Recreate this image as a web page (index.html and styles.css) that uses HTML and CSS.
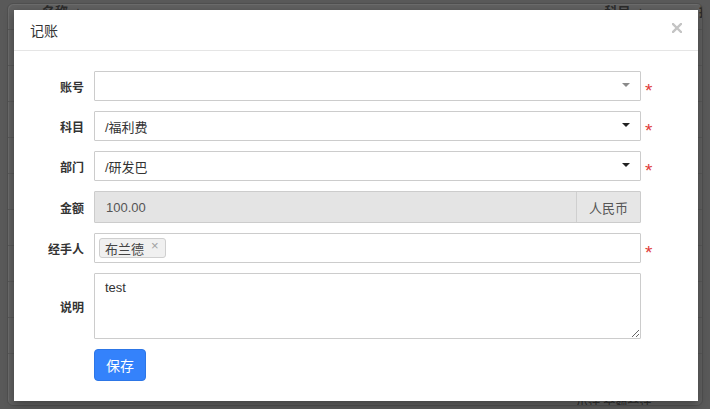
FILE: index.html
```html
<!DOCTYPE html>
<html lang="zh">
<head>
<meta charset="utf-8">
<title>记账</title>
<link rel="stylesheet" href="styles.css">
</head>
<body>
<div class="page">
  <div class="panel">
    <div class="thead">
      <span class="th th-name">名称 ▲</span>
      <span class="th th-subj">科目 ▲</span>
      <span class="th th-desc">描</span>
    </div>
    <div class="trow"></div><div class="trow"></div><div class="trow"></div>
    <div class="trow"></div><div class="trow"></div><div class="trow"></div>
    <div class="trow"></div><div class="trow"></div><div class="trow"></div>
    <div class="tfoot">小计 金额合计</div>
  </div>
</div>

<div class="overlay">
  <div class="modal">
    <div class="modal-header">
      <span class="modal-title">记账</span>
      <svg class="close" width="10" height="10" viewBox="0 0 10 10"><path d="M1 1 L9 9 M9 1 L1 9" stroke="#c4c4c4" stroke-width="2.4" stroke-linecap="square"/></svg>
    </div>
    <div class="modal-body">
      <div class="form">
        <label class="lbl">账号</label>
        <div class="ctrl select"><span class="val"></span><span class="caret caret-gray"></span></div>
        <span class="req">*</span>

        <label class="lbl">科目</label>
        <div class="ctrl select"><span class="val">/福利费</span><span class="caret"></span></div>
        <span class="req">*</span>

        <label class="lbl">部门</label>
        <div class="ctrl select"><span class="val">/研发巴</span><span class="caret"></span></div>
        <span class="req">*</span>

        <label class="lbl">金额</label>
        <div class="ctrl group"><span class="amount">100.00</span><span class="addon">人民币</span></div>
        <span></span>

        <label class="lbl">经手人</label>
        <div class="ctrl tags"><span class="tag">布兰德<span class="tag-x">×</span></span></div>
        <span class="req">*</span>

        <label class="lbl">说明</label>
        <textarea class="ctrl area">test</textarea>
        <span></span>

        <span></span>
        <div class="actions"><button class="btn">保存</button></div>
        <span></span>
      </div>
    </div>
  </div>
</div>
</body>
</html>
```

FILE: styles.css
```css
* { box-sizing: border-box; }
html, body { margin: 0; padding: 0; }
body {
  width: 710px;
  height: 409px;
  overflow: hidden;
  background: #595959;
  font-family: "Liberation Sans", "Noto Sans CJK SC", sans-serif;
  position: relative;
}
.page {
  padding: 3px 7px 0 7px;
  height: 409px;
}
.panel {
  height: 403px;
  background: #616161;
  border: 1px solid #505050;
  border-radius: 6px;
  box-shadow: inset 1px 1px 0 #6c6c6c;
  overflow: hidden;
}
.thead {
  height: 26px;
  border-bottom: 1px solid #575757;
  display: flex;
  align-items: flex-start;
  padding-top: 0;
  font-size: 13px;
  line-height: 16px;
  color: #2c2c2c;
  font-weight: 700;
}
.th-name { margin-left: 34px; }
.th-subj { margin-left: auto; }
.th-desc { margin-left: 52px; margin-right: -10px; }
.trow {
  height: 36px;
  border-bottom: 1px solid #585858;
}
.tfoot {
  font-size: 12px;
  line-height: 14px;
  color: #2c2c2c;
  padding-left: 568px;
  padding-top: 44px;
}

.overlay {
  position: absolute;
  inset: 0;
}
.modal {
  margin: 10px 12px 0 14px;
  background: #fff;
  box-shadow: 0 3px 9px rgba(0,0,0,.35);
  height: 391px;
}
.modal-header {
  height: 41px;
  border-bottom: 1px solid #e5e5e5;
  display: flex;
  align-items: center;
  padding: 0 16px;
}
.modal-title {
  font-size: 14px;
  color: #333;
  margin-top: -1px;
}
.close {
  margin-left: auto;
  margin-top: -5px;
}
.modal-body {
  padding: 20px 16px 20px 16px;
}
.form {
  display: grid;
  grid-template-columns: 54px 547px 12px;
  column-gap: 10px;
  row-gap: 10px;
  align-items: center;
}
.lbl {
  font-size: 12px;
  font-weight: 700;
  color: #333;
  text-align: right;
}
.ctrl {
  border: 1px solid #cccccc;
  border-radius: 1px;
  height: 30px;
  font-size: 13px;
  color: #333;
  display: flex;
  align-items: center;
  background: #fff;
}
.select { padding: 0 10px; justify-content: space-between; }
.caret {
  width: 0;
  height: 0;
  border-left: 4px solid transparent;
  border-right: 4px solid transparent;
  border-top: 4px solid #222;
  margin-top: -2px;
}
.caret-gray { border-top-color: #8a8a8a; }
.req {
  color: #e03a3a;
  font-size: 19px;
  line-height: 1;
  margin-left: -6px;
  margin-top: 8px;
  font-family: "Liberation Sans", sans-serif;
}
.group {
  height: 32px;
  background: #e4e4e4;
  color: #555;
}
.amount { flex: 1; padding-left: 11px; }
.addon {
  width: 64px;
  height: 100%;
  border-left: 1px solid #cfcfcf;
  background: #e6e6e6;
  display: flex;
  align-items: center;
  justify-content: center;
  color: #555;
}
.tags { padding-left: 4px; }
.tag {
  height: 20px;
  border: 1px solid #cfcfcf;
  border-radius: 3px;
  background: #f0f0f0;
  padding: 0 6px 0 5px;
  display: flex;
  align-items: center;
  font-size: 13px;
  color: #444;
}
.tag-x {
  font-size: 13px;
  line-height: 1;
  color: #a0a0a0;
  margin-left: 7px;
  margin-top: -5px;
}
.area {
  height: 66px;
  display: block;
  padding: 6px 10px;
  font-family: "Liberation Sans", "Noto Sans CJK SC", sans-serif;
  font-size: 13px;
  color: #333;
  resize: both;
  align-self: start;
  outline: none;
}
.btn {
  height: 32px;
  width: 52px;
  background: #3482fb;
  border: 1px solid #2d76e6;
  border-radius: 4px;
  color: #fff;
  font-size: 14px;
  font-family: "Liberation Sans", "Noto Sans CJK SC", sans-serif;
  padding: 0;
  display: block;
}
```
